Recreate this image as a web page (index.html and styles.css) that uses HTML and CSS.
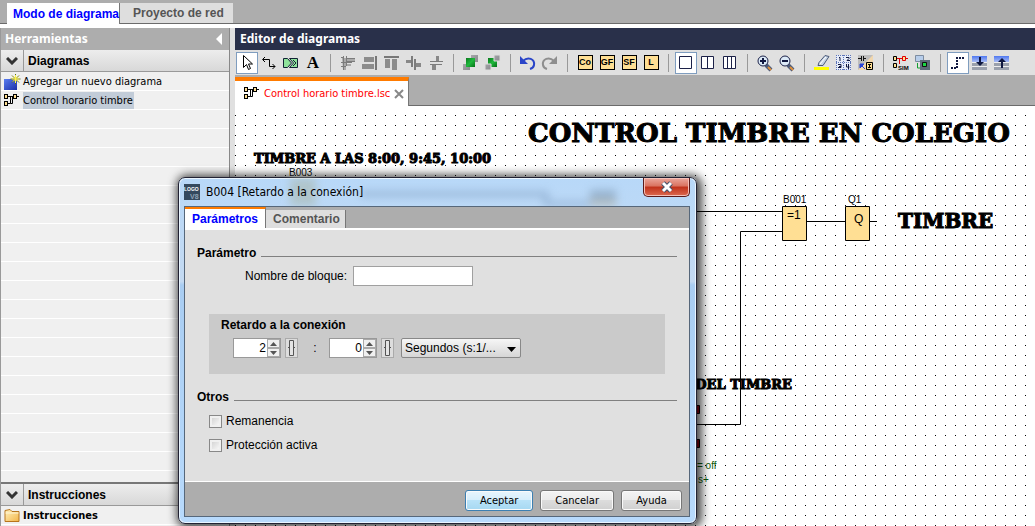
FILE: index.html
```html
<!DOCTYPE html>
<html lang="es">
<head>
<meta charset="utf-8">
<title>Editor de diagramas</title>
<link rel="stylesheet" href="styles.css">
</head>
<body>
<svg class="defs" width="0" height="0" aria-hidden="true">
  <defs>
    <linearGradient id="blue" x1="0" y1="0" x2="1" y2="1"><stop offset="0" stop-color="#5a7ef0"/><stop offset="1" stop-color="#1b2fa8"/></linearGradient>
    <linearGradient id="green" x1="0" y1="0" x2="1" y2="1"><stop offset="0" stop-color="#0a7a1e"/><stop offset=".5" stop-color="#1fb83c"/><stop offset="1" stop-color="#067018"/></linearGradient>
    <linearGradient id="gray" x1="0" y1="0" x2="1" y2="1"><stop offset="0" stop-color="#b8b8bc"/><stop offset="1" stop-color="#77777c"/></linearGradient>
    <linearGradient id="folder" x1="0" y1="0" x2="1" y2="1"><stop offset="0" stop-color="#fff3c0"/><stop offset="1" stop-color="#f3b548"/></linearGradient>
    <linearGradient id="band" x1="0" y1="0" x2="0" y2="1"><stop offset="0" stop-color="#4f78f0"/><stop offset="1" stop-color="#a9bdf5"/></linearGradient>
    <symbol id="i-net" viewBox="0 0 16 16"><path d="M4 3.500h5M6.500 3.500v7h-3M13 3.500h2M8.500 3.500v7h-2" fill="none" stroke="#000"/><g fill="#ffdf94" stroke="#000"><rect x=".5" y="1.500" width="3" height="4"/><rect x="9.500" y="1.500" width="3" height="4"/><rect x=".5" y="8.500" width="3" height="4"/></g></symbol>
  </defs>
</svg>

<nav class="modes">
  <button class="mode mode-on">Modo de diagrama</button>
  <button class="mode">Proyecto de red</button>
</nav>

<main class="work">
  <aside class="tools">
    <header class="tools-head"><span>Herramientas</span><svg width="7" height="12" viewBox="0 0 7 12"><path d="M6 0v12L0 6z" fill="#fff"/></svg></header>
    <button class="section"><span class="chev"><svg width="12" height="8" viewBox="0 0 12 8"><path d="M1 1l5 5 5-5" fill="none" stroke="#333" stroke-width="3"/></svg></span><span class="section-name">Diagramas</span></button>
    <ul class="tree">
      <li><svg width="17" height="16" viewBox="0 0 17 16"><path d="M0 5h11l2 2v9H0z" fill="url(#blue)"/><path d="M11.500 0v10M6.500 5h10M8 1.500l7 7M15 1.500l-7 7" stroke="#5b6b20"/><path d="M11.500 1v8M7.500 5h8M9 2.500l5 5M14 2.500l-5 5" stroke="#fff34a"/></svg><a href="#nuevo">Agregar un nuevo diagrama</a></li>
      <li><svg width="16" height="16"><use href="#i-net" width="16" height="16"/></svg><a href="#control" class="picked">Control horario timbre</a></li>
    </ul>
    <button class="section section-low"><span class="chev"><svg width="12" height="8" viewBox="0 0 12 8"><path d="M1 1l5 5 5-5" fill="none" stroke="#333" stroke-width="3"/></svg></span><span class="section-name">Instrucciones</span></button>
    <ul class="tree tree-short">
      <li><svg width="16" height="15" viewBox="0 0 16 15"><path d="M.5 13.500V2.500l5-1 2 2h7v10z" fill="url(#folder)" stroke="#b8751c"/><path d="M1 5h13" stroke="#fff6d8"/></svg><a href="#instrucciones"><b>Instrucciones</b></a></li>
    </ul>
  </aside>

  <section class="editor">
    <h1 class="editor-head">Editor de diagramas</h1>
    <div class="toolbar" role="toolbar">
      <button class="tb tb-on" aria-label="Selección"><svg viewBox="0 0 20 20"><path d="M6.500 2.500v12l3-3 2 5 2-1-2-4.500h4z" fill="#fff" stroke="#000"/></svg></button>
      <button class="tb" aria-label="Conexión"><svg viewBox="0 0 20 20"><path d="M4 6.500h6.500v7H16M6 4L3.500 6.500 6 9M13.500 11l2.500 2.500-2.500 2.500" fill="none" stroke="#000"/></svg></button>
      <button class="tb" aria-label="Cortar"><svg viewBox="0 0 20 20"><path d="M2.500 5.500h4l4 4.500-4 4.500h-4z" fill="#8fe39b" stroke="#123"/><path d="M8.500 5.500h8v9h-8l4-4.500z" fill="#8fe39b" stroke="#123"/><path d="M12 7l3 3-3 3" fill="none" stroke="#123"/></svg></button>
      <button class="tb tb-text" aria-label="Texto">A</button>
      <i class="sep"></i>
      <button class="tb" aria-label="Alinear"><svg viewBox="0 0 20 20"><path d="M4 5h13v3H9v3h4v2H8v4H5z" fill="#aaa"/><path d="M3 4.500h3M3 9.500h11M9 5.500h8M9 8.500h8M3 13.500h5M5.500 3v14M8.500 3v10" fill="none" stroke="#7c7c7c"/></svg></button>
      <button class="tb" aria-label="Alinear a la derecha"><svg viewBox="0 0 20 20"><path d="M4 4h10v5H4zM2 11h12v5H2z" fill="#8c8c8c"/><path d="M16 3v14" stroke="#777" stroke-width="2"/></svg></button>
      <button class="tb" aria-label="Alinear arriba"><svg viewBox="0 0 20 20"><path d="M3 6h5v9H3zM10 6h5v11h-5z" fill="#8c8c8c"/><path d="M2 4h15" stroke="#777" stroke-width="2"/></svg></button>
      <button class="tb" aria-label="Centrar vertical"><svg viewBox="0 0 20 20"><path d="M2 7h5v3H2zM12 10h5v4h-5z" fill="#888"/><path d="M8 3v11M11 6v11" stroke="#7c7c7c" stroke-width="2"/></svg></button>
      <button class="tb" aria-label="Centrar horizontal"><svg viewBox="0 0 20 20"><path d="M10 3h3v5h-3zM6 12h4v5H6z" fill="#888"/><path d="M4 8.500h13M4 11.500h12" stroke="#7c7c7c"/></svg></button>
      <i class="sep"></i>
      <button class="tb" aria-label="Traer al frente"><svg viewBox="0 0 20 20"><path d="M10 2h7v7h-3V5h-4zM2 11h3v3h4v3H2z" fill="url(#gray)"/><path d="M5 5h9v9H5z" fill="url(#green)"/></svg></button>
      <button class="tb" aria-label="Enviar al fondo"><svg viewBox="0 0 20 20"><path d="M5 5h9v9H5z" fill="url(#green)"/><path d="M11 2h6v6h-6zM2 11h6v6H2z" fill="url(#gray)" stroke="#ddd"/></svg></button>
      <i class="sep"></i>
      <button class="tb" aria-label="Deshacer"><svg viewBox="0 0 20 20"><path d="M5 8c5-5 12-2 11 4q-.5 3-4 4" fill="none" stroke="#2a45c8" stroke-width="2"/><path d="M2 3v8h8z" fill="#2a45c8"/></svg></button>
      <button class="tb" aria-label="Rehacer"><svg viewBox="0 0 20 20"><path d="M14 8c-5-5-12-2-11 4q.5 3 4 4" fill="none" stroke="#8e8e8e" stroke-width="2"/><path d="M17 3v8H9z" fill="#8e8e8e"/></svg></button>
      <i class="sep"></i>
      <button class="tb"><span class="chip">Co</span></button>
      <button class="tb"><span class="chip">GF</span></button>
      <button class="tb"><span class="chip">SF</span></button>
      <button class="tb"><span class="chip">L</span></button>
      <i class="sep"></i>
      <button class="tb tb-on" aria-label="Una ventana"><svg viewBox="0 0 20 20"><path d="M3.500 3.500h12v12h-12z" fill="#fff" stroke="#1c2148"/></svg></button>
      <button class="tb" aria-label="Dos ventanas"><svg viewBox="0 0 20 20"><path d="M3.500 3.500h12v12h-12zM9.500 3v13" fill="#fff" stroke="#1c2148"/></svg></button>
      <button class="tb" aria-label="Tres ventanas"><svg viewBox="0 0 20 20"><path d="M3.500 3.500h12v12h-12zM7.500 3v13M11.500 3v13" fill="#fff" stroke="#1c2148"/></svg></button>
      <i class="sep"></i>
      <button class="tb" aria-label="Ampliar"><svg viewBox="0 0 20 20"><path d="M11 12l5 5" stroke="#4b5a7a" stroke-width="4"/><path d="M13 14l3 3" stroke="#e0913a" stroke-width="2"/><circle cx="8" cy="8" r="5" fill="#dceaf8" stroke="#1c2148"/><path d="M5 8h6M8 5v6" stroke="#111840" stroke-width="2"/></svg></button>
      <button class="tb" aria-label="Reducir"><svg viewBox="0 0 20 20"><path d="M11 12l5 5" stroke="#4b5a7a" stroke-width="4"/><path d="M13 14l3 3" stroke="#e0913a" stroke-width="2"/><circle cx="8" cy="8" r="5" fill="#dceaf8" stroke="#1c2148"/><path d="M5 8h6" stroke="#111840" stroke-width="2"/></svg></button>
      <i class="sep"></i>
      <button class="tb" aria-label="Resaltar"><svg viewBox="0 0 20 20"><path d="M2 14h15v3H2z" fill="#ff0"/><path d="M13 2.500l4 1-6 9H6l1-3z" fill="#c9d6e6" stroke="#4c5a78"/><path d="M14 4l-6 7" stroke="#fff"/></svg></button>
      <button class="tb" aria-label="Dividir páginas"><svg viewBox="0 0 20 20"><path d="M2 2h15v15H2z" fill="#e6ecf8"/><path d="M2 9.500h15M9.500 2v15M2.500 2v15M16.500 2v15M2 2.500h15M2 16.500h15" stroke="#5c74b8" stroke-dasharray="1 1"/><path d="M5 4.500h1V8M12 4.500h3v1l-2 2h3M4 11.500h3v3H4M7 13.500H5M12.500 11v3h3M14.500 11v5" fill="none" stroke="#101840"/></svg></button>
      <button class="tb" aria-label="Convertir"><svg viewBox="0 0 20 20"><path d="M2 2h15v15H2z" fill="#bdbdbd"/><path d="M17 2v15H2z" fill="#f1d7ae"/><path d="M2 5.500h3M5.500 3v5M7.500 3v5M8 5.500h2" stroke="#111"/><path d="M4 11h4l-4 4zM5 12l4 4" fill="#2a45d8" stroke="#2a45d8"/><path d="M10.500 9.500h6v7h-6z" fill="#ffdf94" stroke="#000"/><path d="M12 11.500h3M12 14.500h3M13.500 11v4" stroke="#000"/></svg></button>
      <i class="sep"></i>
      <button class="tb" aria-label="Simulación"><svg viewBox="0 0 20 20"><path d="M5 5.500h6M8.500 5v6M14 5.500h3" stroke="#e00000"/><path d="M2.500 3.500h3v4h-3zM2.500 10.500h3v4h-3z" fill="#ffdf94" stroke="#000"/><path d="M11.500 3.500h3v4h-3z" fill="#ffdf94" stroke="#e00000"/><text x="7" y="17" class="sim">SIM</text></svg></button>
      <button class="tb" aria-label="Prueba online"><svg viewBox="0 0 20 20"><path d="M2.500 2.500h8v6h-8z" fill="#b7cdea" stroke="#7d8ca0"/><path d="M4.500 10v5H9" fill="none" stroke="#12a030"/><path d="M7 7h10v10H7z" fill="#5c6a78"/><path d="M9.500 9.500h4v4h-4z" fill="#19d943" stroke="#111"/></svg></button>
      <i class="sep"></i>
      <button class="tb tb-on" aria-label="Líneas"><svg viewBox="0 0 20 20"><path d="M3 15h6V5h7" fill="none" stroke="#101840" stroke-width="2" stroke-dasharray="2 1"/></svg></button>
      <button class="tb" aria-label="Descargar"><svg viewBox="0 0 20 20"><path d="M2 3h15v6H2z" fill="url(#band)"/><path d="M2 10h15v7H2z" fill="#9aa0ac"/><path d="M2 9.500h15M2 13.500h15" stroke="#eee"/><path d="M9 4h2v5h3l-4 4-4-4h3z" fill="#101840"/></svg></button>
      <button class="tb" aria-label="Cargar"><svg viewBox="0 0 20 20"><path d="M2 3h15v6H2z" fill="url(#band)"/><path d="M2 10h15v7H2z" fill="#9aa0ac"/><path d="M2 9.500h15M2 13.500h15" stroke="#eee"/><path d="M9 15h2V9h3l-4-4-4 4h3z" fill="#101840"/></svg></button>
    </div>
    <div class="files">
      <div class="file"><svg width="16" height="16"><use href="#i-net" width="16" height="16"/></svg><span>Control horario timbre.lsc</span><button class="file-x" aria-label="Cerrar"><svg width="10" height="10" viewBox="0 0 10 10"><path d="M1 1l8 8M9 1L1 9" stroke="#888" stroke-width="2"/></svg></button></div>
    </div>
    <div class="canvas">
      <svg class="sheet" width="800" height="420" viewBox="235 106 800 420">
        <g stroke="#000" fill="none">
          <path d="M690 211.500h92M690 424.500h50.500v-193H782M807 221.500h38M870 221.500h7"/>
          <path d="M782.500 206.500h24v34h-24zM845.500 206.500h24v34h-24z" fill="#ffdf94"/>
          <path d="M690.500 405.500h9v8h-9zM690.500 439.500h9v8h-9z" fill="#a00010"/>
        </g>
        <text class="slab slab-xl" x="528" y="142">CONTROL TIMBRE EN COLEGIO</text>
        <text class="slab slab-s" x="254" y="163">TIMBRE A LAS 8:00, 9:45, 10:00</text>
        <text class="slab slab-m" x="898" y="228">TIMBRE</text>
        <text class="slab slab-s" x="792" y="389" text-anchor="end">DEL TIMBRE</text>
        <text class="tag" x="289" y="176">B003</text>
        <text class="tag" x="783" y="203">B001</text>
        <text class="tag" x="848" y="203">Q1</text>
        <text class="pin" x="787" y="219">=1</text>
        <text class="pin" x="854" y="223">Q</text>
        <text class="tag note" x="697" y="469">= off</text>
        <text class="tag note" x="698" y="483">s+</text>
      </svg>
    </div>
  </section>
</main>

<div class="dialog" role="dialog" aria-labelledby="dlg-title">
  <svg class="glass" width="517" height="28" viewBox="179 178 517 28" aria-hidden="true"><path d="M360 194h186v10h44" fill="none" stroke="#7d9cc0" stroke-width="5"/><path d="M290 178h26v28h-26z" fill="#a9b8ae"/><path d="M590 190h26v10h-26z" fill="#7f9ab4"/><path d="M590 200h26v8h-26z" fill="#b7ae98"/></svg>
  <header class="dlg-head">
    <svg class="logo" width="16" height="16" viewBox="0 0 16 16"><path d="M0 0h16v16H0z" fill="#34495e"/><text x="0" y="7" class="logo-a">LOGO</text><text x="6" y="15" class="logo-b">V8</text></svg>
    <h2 id="dlg-title">B004 [Retardo a la conexión]</h2>
    <button class="close" aria-label="Cerrar"><svg width="14" height="12" viewBox="0 0 14 12"><path d="M3 2l8 8M11 2l-8 8" stroke="#44506a" stroke-width="5"/><path d="M3 2l8 8M11 2l-8 8" stroke="#fff" stroke-width="3"/></svg></button>
  </header>
  <div class="client">
    <div class="tabs" role="tablist">
      <button class="tab tab-on" role="tab" aria-selected="true">Parámetros</button>
      <button class="tab" role="tab">Comentario</button>
    </div>
    <form class="body">
      <h3 class="rule">Parámetro</h3>
      <div class="name-row"><label for="block">Nombre de bloque:</label><input id="block" class="field" type="text"></div>
      <div class="delay">
        <label class="delay-name" for="secs">Retardo a la conexión</label>
        <div class="delay-row">
          <span class="spin"><input id="secs" type="text" value="2"><span class="steps"><button type="button" aria-label="Más"><svg width="7" height="4"><path d="M0 4L3.500 0 7 4z" fill="#555"/></svg></button><button type="button" aria-label="Menos"><svg width="7" height="4"><path d="M0 0h7L3.500 4z" fill="#555"/></svg></button></span></span>
          <button type="button" class="ref" aria-label="Referencia"><svg width="7" height="16" viewBox="0 0 7 16"><path d="M1.500.5h4v15h-4zM0 7.500h1M6 7.500h1" fill="#e4e4e4" stroke="#555"/></svg></button>
          <span class="colon">:</span>
          <span class="spin"><input type="text" value="0" aria-label="Centésimas"><span class="steps"><button type="button" aria-label="Más"><svg width="7" height="4"><path d="M0 4L3.500 0 7 4z" fill="#555"/></svg></button><button type="button" aria-label="Menos"><svg width="7" height="4"><path d="M0 0h7L3.500 4z" fill="#555"/></svg></button></span></span>
          <button type="button" class="ref" aria-label="Referencia"><svg width="7" height="16" viewBox="0 0 7 16"><path d="M1.500.5h4v15h-4zM0 7.500h1M6 7.500h1" fill="#e4e4e4" stroke="#555"/></svg></button>
          <span class="unit"><select aria-label="Unidad"><option>Segundos (s:1/...</option></select><svg width="9" height="5"><path d="M0 0h9L4.500 5z"/></svg></span>
        </div>
      </div>
      <h3 class="rule">Otros</h3>
      <label class="check"><input type="checkbox">Remanencia</label>
      <label class="check"><input type="checkbox">Protección activa</label>
    </form>
    <footer class="actions">
      <button class="btn btn-main">Aceptar</button>
      <button class="btn">Cancelar</button>
      <button class="btn">Ayuda</button>
    </footer>
  </div>
</div>
</body>
</html>
```
FILE: styles.css
```css
* { box-sizing: border-box; }
:root {
  --arial: "Liberation Sans", Arial, sans-serif;
  --ui: "DejaVu Sans Condensed", "DejaVu Sans", sans-serif;
  --head: "Noto Sans", "Open Sans", sans-serif;
}
body { margin: 0; height: 100vh; display: flex; flex-direction: column; overflow: hidden; position: relative; background: #fff; font: 12px/16px var(--arial); color: #000; }
button, input, select { font: inherit; color: inherit; margin: 0; padding: 0; border: 0; border-radius: 0; background: none; }
h1, h2, h3, ul { margin: 0; padding: 0; font-size: 12px; list-style: none; }
a { color: inherit; text-decoration: none; }
.defs { position: absolute; }

.modes { display: flex; align-items: flex-end; height: 24px; padding-left: 7px; background: #adadad; border-bottom: 1px solid #6b6b6b; flex: none; }
.mode { height: 20px; padding: 0 9px 0 13px; font-weight: bold; color: #555; background: #dedede; white-space: nowrap; }
.mode-on { height: 21px; margin-bottom: -1px; padding: 0 0 0 6px; color: #00f; background: #fff; border-right: 1px solid #777; }

.work { flex: 1; display: flex; min-height: 0; padding-top: 4px; }
.tools { width: 235px; flex: none; display: flex; flex-direction: column; border-left: 1px solid #999; border-right: 5px solid #e0e0e0; background: #f0f0f0; box-shadow: inset -1px 0 #888; padding-right: 1px; }
.tools-head { height: 22px; flex: none; display: flex; justify-content: space-between; align-items: center; padding: 0 6px 0 4px; background: #adadad; color: #fff; font: bold 12px/22px var(--head); }
.section { height: 22px; flex: none; display: flex; align-items: stretch; background: linear-gradient(#ededed, #d8d8d8); border-bottom: 1px solid #999; font-weight: bold; line-height: 22px; text-align: left; }
.section-low { height: 24px; border-top: 2px solid #777; }
.chev { width: 23px; display: grid; place-items: center; border-right: 1px solid #999; }
.section-name { padding-left: 4px; }
.tree { flex: 1; background: repeating-linear-gradient(#f0f0f0 0 18px, #fff 18px 19px); font: 11px/17px var(--ui); }
.tree-short { flex: none; height: 20px; }
.tree li { height: 19px; display: flex; align-items: center; gap: 2px; padding-left: 3px; }
.tree svg { width: 17px; flex: none; }
.tree a { padding-right: 1px; white-space: nowrap; }
.tree .picked { background: #c2ccd8; }

.editor { flex: 1; min-width: 0; display: flex; flex-direction: column; }
.editor-head { height: 22px; padding-left: 5px; background: #29304a; color: #fff; font: bold 12px/21px var(--head); }
.toolbar { height: 25px; flex: none; display: flex; align-items: center; padding: 0 1px; background: #e0e0e0; }
.tb { width: 22px; height: 22px; flex: none; display: grid; place-items: center; }
.tb > svg { width: 20px; height: 20px; display: block; }
.tb-on { background: #fff; border: 1px solid #7f9dbf; }
.tb-text { font: bold 17px/22px "Liberation Serif", serif; }
.sep { width: 1px; height: 18px; margin: 0 6px; flex: none; background: #999; }
.chip { width: 15px; height: 15px; background: #ffdf94; border: 1px solid #000; font: bold 9px/13px var(--arial); text-align: center; }
.sim { font: bold 6px var(--arial); }
.files { height: 31px; flex: none; display: flex; align-items: flex-end; padding-top: 2px; background: #adadad; border-bottom: 1px solid #6b6b6b; }
.file { height: 29px; margin-bottom: -1px; display: flex; align-items: center; gap: 4px; padding: 0 4px 0 9px; background: #fff; border-top: 4px solid #ff7b00; border-right: 1px solid #777; color: #f00; font: 11px/16px var(--ui); white-space: nowrap; }
.file-x { display: flex; }
.canvas { flex: 1; min-height: 0; overflow: hidden; background: conic-gradient(from 270deg at 1px 1px, #000 90deg, transparent 0) 0 9px / 10px 10px; }
.sheet { display: block; }
.slab { font-family: "DejaVu Serif", serif; font-weight: bold; stroke: #000; stroke-width: 1px; }
.slab-xl { font-size: 26px; }
.slab-m { font-size: 20px; }
.slab-s { font-size: 13px; }
.tag { font: 10px var(--arial); }
.pin { font: 12px var(--arial); }
.note { fill: #0a5a0a; }

.dialog { position: absolute; left: 178px; top: 177px; width: 519px; padding: 0 6px 6px 5px; border: 1px solid #223; border-radius: 7px; background: linear-gradient(#b8d8f8, #c4daf2 30%, #a9cdf2 31%, #b8dafc); box-shadow: inset 0 0 0 1px #eaf5ff, 2px 1px 10px 3px #000b; }
.glass { position: absolute; left: 0; top: 0; filter: blur(4px); opacity: .6; }
.dlg-head { position: relative; height: 28px; display: flex; align-items: center; gap: 6px; }
.dlg-head h2 { flex: 1; font: 12px/16px var(--ui); }
.logo-a { font: bold 5px var(--arial); fill: #fff; }
.logo-b { font: bold 7px var(--arial); fill: #8fa3b5; }
.close { align-self: flex-start; width: 47px; height: 19px; display: grid; place-items: center; border: 1px solid #5a1a1a; border-top: 0; border-radius: 0 0 5px 5px; background: linear-gradient(#eba79c, #d9725f 45%, #c0311a 50%, #dc6a50); box-shadow: inset 0 0 0 1px #f5c0b8; }
.client { position: relative; border: 1px solid #56677a; background: #e0e0e0; }
.tabs { height: 23px; display: flex; align-items: flex-start; background: #adadad; border-bottom: 2px solid #fff; }
.tab { height: 18px; margin-top: 3px; padding: 0 5px 0 7px; background: #dedede; border-right: 1px solid #777; color: #555; font-weight: bold; line-height: 18px; }
.tab-on { height: 21px; margin-top: 0; padding: 0 7px; border-top: 2px solid #ff7b00; background: #fff; color: #00f; line-height: 20px; }
.body { padding: 15px 12px 28px; }
.rule { display: flex; gap: 5px; line-height: 16px; }
.rule::after { content: ""; flex: 1; height: 1px; margin-top: 11px; background: #808080; }
.name-row { display: flex; align-items: center; gap: 6px; margin: 5px 0 28px 48px; }
.name-row label { white-space: nowrap; }
.field { width: 120px; height: 20px; background: #fff; border: 1px solid #a0a0a0; }
.delay { height: 60px; margin: 0 12px 15px; padding: 3px 12px; background: #cacaca; }
.delay-name { display: block; font-weight: bold; }
.delay-row { display: flex; align-items: center; margin: 5px 0 0 12px; }
.spin { display: flex; width: 48px; height: 20px; border: 1px solid #999; background: #e4e4e4; }
.spin input { width: 33px; padding-right: 1px; background: #fff; text-align: right; }
.steps { flex: 1; display: grid; grid-template-rows: 1fr 1fr; }
.steps button { display: grid; place-items: center; border: 1px solid #aaa; background: #f0f0f0; }
.ref { width: 13px; height: 20px; margin-left: 4px; display: grid; place-items: center; background: #ddd; border: 1px solid #aaa; }
.colon { width: 31px; text-align: center; padding-left: 3px; }
.unit { position: relative; margin-left: 7px; }
.unit select { display: block; appearance: none; width: 120px; height: 20px; padding-left: 3px; border: 1px solid #888; border-radius: 2px; background: linear-gradient(#f6f6f6, #d6d6d6); }
.unit svg { position: absolute; right: 5px; top: 9px; }
.check { display: flex; align-items: center; width: max-content; height: 16px; margin: 8px 0 0 12px; }
.check input { appearance: none; width: 13px; height: 13px; margin-right: 4px; border: 1px solid #888; background: linear-gradient(135deg, #ccc, #fff); box-shadow: inset 0 0 0 2px #f0f0f0; }
.actions { display: flex; justify-content: flex-end; gap: 7px; padding: 8px 7px 5px; background: #adadad; border-top: 1px solid #fff; }
.btn { height: 21px; min-width: 61px; padding: 0 14px; border: 1px solid #777; border-radius: 3px; background: linear-gradient(#f4f4f4, #ebebeb 49%, #dcdcdc 50%, #d0d0d0); box-shadow: inset 0 0 0 1px #fafafa; font: 11px/16px var(--ui); }
.btn-main { border-color: #3c7fb1; background: linear-gradient(#e8f5fd, #d5eefc 49%, #b8e2f8 50%, #a6d8f2); }
```
